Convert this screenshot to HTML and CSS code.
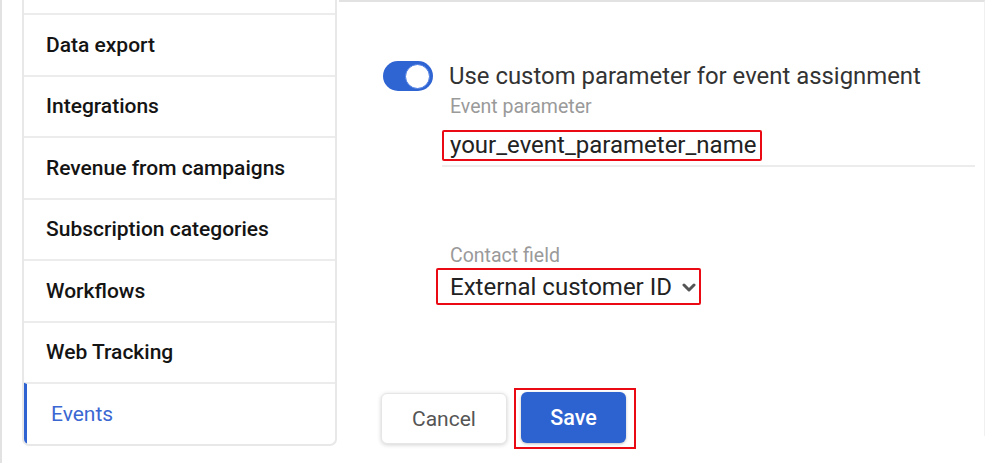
FILE: index.html
```html
<!DOCTYPE html>
<html lang="en">
<head>
<meta charset="utf-8">
<title>Events settings</title>
<link rel="stylesheet" href="styles.css">
</head>
<body>
<div class="page">
  <aside class="sidebar">
    <nav class="menu">
      <div class="menu-stub"></div>
      <a class="menu-item">Data export</a>
      <a class="menu-item">Integrations</a>
      <a class="menu-item">Revenue from campaigns</a>
      <a class="menu-item">Subscription categories</a>
      <a class="menu-item">Workflows</a>
      <a class="menu-item">Web Tracking</a>
      <a class="menu-item active">Events</a>
    </nav>
  </aside>
  <main class="panel">
    <div class="toggle-row">
      <span class="toggle"><span class="knob"></span></span>
      <span class="toggle-label">Use custom parameter for event assignment</span>
    </div>
    <div class="field field-param">
      <div class="field-label">Event parameter</div>
      <div class="input-line">
        <span class="highlight input-value">your_event_parameter_name</span>
      </div>
    </div>
    <div class="field field-contact">
      <div class="field-label">Contact field</div>
      <span class="highlight select-value">External customer ID
        <svg class="chevron" width="14" height="9" viewBox="0 0 14 9"><path d="M2 2 L7 7 L12 2" fill="none" stroke="#555" stroke-width="3" stroke-linecap="round" stroke-linejoin="round"/></svg>
      </span>
    </div>
    <div class="actions">
      <button class="btn btn-cancel">Cancel</button>
      <span class="save-box"><button class="btn btn-save">Save</button></span>
    </div>
  </main>
</div>
</body>
</html>
```

FILE: styles.css
```css
* { box-sizing: border-box; }
html, body { margin: 0; padding: 0; background: #fff; }
body {
  font-family: Roboto, "Liberation Sans", Arial, sans-serif;
  color: #222;
  width: 985px;
  height: 463px;
  overflow: hidden;
}
.page {
  display: flex;
  height: 463px;
  border-left: 2px solid #e2e2e2;
}
.sidebar {
  padding-left: 20px;
  width: 337px;
  flex: none;
}
.menu {
  width: 315px;
  display: flex;
  flex-direction: column;
  border-right: 2px solid #e8e8e8;
  border-left: 2px solid #e8e8e8;
  border-bottom: 2px solid #e8e8e8;
  border-radius: 0 0 7px 7px;
  overflow: hidden;
}
.menu-stub { height: 13px; }
.menu-item {
  display: flex;
  align-items: center;
  height: 61.5px;
  border-top: 2px solid #ececec;
  padding-left: 22px;
  font-size: 21px;
  font-weight: 500;
  color: #141414;
  text-decoration: none;
}
.menu-item.active {
  color: #3a67d2;
  font-weight: 400;
  border-left: 5px solid #2e63d1;
  padding-left: 24px;
  margin-left: -2px;
}
.panel {
  flex: 1;
  border-top: 2px solid #e2e2e2;
  border-right: 1px solid #f0f0f0;
  height: 436px;
  padding-left: 44px;
  display: flex;
  flex-direction: column;
}
.toggle-row {
  display: flex;
  align-items: center;
  margin-top: 59px;
  height: 30px;
}
.toggle {
  width: 50px;
  height: 30px;
  border-radius: 15px;
  background: #2f64d3;
  display: flex;
  align-items: center;
  justify-content: flex-end;
  padding-right: 3px;
  flex: none;
}
.knob {
  width: 25px;
  height: 25px;
  border-radius: 50%;
  background: #fff;
  border: 1.5px solid #4a7be0;
}
.toggle-label {
  margin-left: 16px;
  font-size: 23.9px;
  line-height: 30px;
  color: #333;
}
.field-param { margin-left: 59px; margin-top: 5px; }
.field-label {
  font-size: 19.5px;
  color: #9a9a9a;
  margin-left: 8px;
  line-height: 22px;
}
.input-line {
  margin-top: 12px;
  border-bottom: 2px solid #ececec;
  width: 533px;
  padding-bottom: 4px;
  line-height: 0;
}
.highlight {
  display: inline-flex;
  align-items: center;
  border: 2px solid #ea0a14;
  border-radius: 2px;
  color: #222;
}
.input-value {
  height: 31px;
  padding: 0 4px 0 6px;
  font-size: 24px;
  line-height: 27px;
}
.field-contact { margin-left: 53px; margin-top: 78px; }
.field-contact .field-label { margin-left: 14px; }
.select-value {
  margin-top: 1px;
  height: 37px;
  padding: 0 3px 0 12px;
  font-size: 24px;
  line-height: 30px;
}
.chevron { margin-left: 10px; margin-top: 2px; }
.actions {
  display: flex;
  align-items: center;
  margin-top: 83px;
  margin-left: -2px;
}
.btn {
  font-family: inherit;
  font-size: 21px;
  height: 51px;
  border-radius: 6px;
  cursor: pointer;
}
.btn-cancel {
  width: 126px;
  background: #fff;
  color: #555;
  border: 1px solid #e6e6e6;
  box-shadow: 0 1px 4px rgba(0,0,0,0.18);
}
.save-box {
  display: inline-flex;
  margin-left: 7px;
  border: 2px solid #ea0a14;
  padding: 2px 8px 4px 5px;
}
.btn-save {
  width: 105px;
  background: #2d63d1;
  color: #fff;
  border: none;
  font-size: 21.5px;
  font-weight: 500;
  box-shadow: 0 1px 3px rgba(0,0,0,0.25);
}
```
